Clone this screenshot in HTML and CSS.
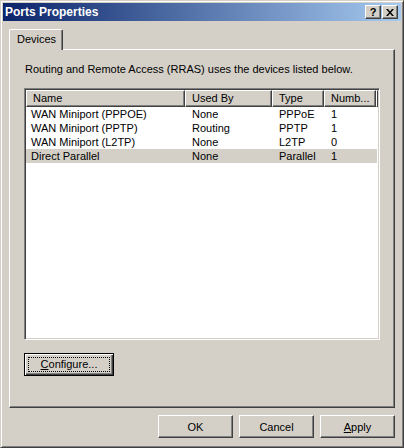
FILE: index.html
```html
<!DOCTYPE html>
<html lang="en">
  <head>
    <meta charset="UTF-8" />
    <title>Ports Properties</title>
    <link rel="stylesheet" href="styles.css">
  </head>
  <body>
    <div class="window">
      <div class="titlebar">
        <span class="title">Ports Properties</span>
        <div class="caption-btns">
          <span class="cap-btn help">?</span>
          <span class="cap-btn close">
            <svg width="8" height="7" viewBox="0 0 8 7">
              <path d="M0 0h2l2 2.5L6 0h2L5 3.5 8 7H6L4 4.5 2 7H0l3-3.5z" fill="#000" />
            </svg>
          </span>
        </div>
      </div>

      <div class="tabs">
        <div class="tab">Devices</div>
      </div>

      <div class="panel">
        <p class="intro">Routing and Remote Access (RRAS) uses the devices listed below.</p>

        <div class="listview">
          <div class="lv-header">
            <div class="lv-col col-name">Name</div>
            <div class="lv-col col-used">Used By</div>
            <div class="lv-col col-type">Type</div>
            <div class="lv-col col-num">Numb...</div>
            <div class="lv-col lv-fill"></div>
          </div>
          <div class="lv-row">
            <span class="col-name">WAN Miniport (PPPOE)</span>
            <span class="col-used">None</span>
            <span class="col-type">PPPoE</span>
            <span class="col-num">1</span>
          </div>
          <div class="lv-row">
            <span class="col-name">WAN Miniport (PPTP)</span>
            <span class="col-used">Routing</span>
            <span class="col-type">PPTP</span>
            <span class="col-num">1</span>
          </div>
          <div class="lv-row">
            <span class="col-name">WAN Miniport (L2TP)</span>
            <span class="col-used">None</span>
            <span class="col-type">L2TP</span>
            <span class="col-num">0</span>
          </div>
          <div class="lv-row selected">
            <span class="col-name">Direct Parallel</span>
            <span class="col-used">None</span>
            <span class="col-type">Parallel</span>
            <span class="col-num">1</span>
          </div>
        </div>

        <button class="btn btn-default"><span class="focus"><u>C</u>onfigure...</span></button>
      </div>

      <div class="actions">
        <button class="btn">OK</button>
        <button class="btn">Cancel</button>
        <button class="btn"><u>A</u>pply</button>
      </div>
    </div>
  </body>
</html>
```

FILE: styles.css
```css
* {
  box-sizing: border-box;
}

html,
body {
  margin: 0;
  padding: 0;
  background: #d4d0c8;
}
body {
  font-family: "Liberation Sans", Arial, sans-serif;
  font-size: 11px;
  color: #000;
}

.window {
  width: 404px;
  height: 448px;
  padding: 2px;
  border: 1px solid;
  border-color: #d4d0c8 #404040 #404040 #d4d0c8;
  box-shadow: inset 1px 1px #fff, inset -1px -1px #808080;
  background: #d4d0c8;
  display: flex;
  flex-direction: column;
}

/* title bar */
.titlebar {
  height: 18px;
  display: flex;
  align-items: center;
  padding: 0 3px 0 2px;
  background: linear-gradient(to right, #0a246a, #a6caf0);
}
.title {
  color: #fff;
  font-weight: bold;
  font-size: 12px;
}
.caption-btns {
  margin-left: auto;
  display: flex;
  gap: 1px;
}
.cap-btn {
  width: 16px;
  height: 14px;
  border: 1px solid;
  border-color: #fff #404040 #404040 #fff;
  box-shadow: inset -1px -1px #808080;
  background: #d4d0c8;
  display: flex;
  align-items: center;
  justify-content: center;
}
.cap-btn.help {
  font-weight: bold;
  font-size: 11px;
  line-height: 1;
}
.cap-btn.close svg {
  display: block;
}

/* tab strip */
.tabs {
  display: flex;
  margin: 8px 0 0 6px;
}
.tab {
  position: relative;
  z-index: 1;
  width: 54px;
  height: 21px;
  margin-bottom: -1px;
  padding-left: 7px;
  line-height: 19px;
  border: 1px solid;
  border-bottom: none;
  border-color: #fff #404040 #404040 #fff;
  border-radius: 2px 2px 0 0;
  box-shadow: inset -1px 0 #808080;
  background: #d4d0c8;
}

.panel {
  margin: 0 6px;
  height: 359px;
  padding: 13px 14px 0;
  border: 1px solid;
  border-color: #fff #404040 #404040 #fff;
  box-shadow: inset -1px -1px #808080;
}
.intro {
  margin: 0 0 12px 1px;
  line-height: 13px;
}

/* list view */
.listview {
  width: 356px;
  height: 252px;
  padding: 1px;
  border: 1px solid;
  border-color: #808080 #fff #fff #808080;
  box-shadow: inset 1px 1px #404040, inset -1px -1px #d4d0c8;
  background: #fff;
}
.lv-header {
  display: flex;
  height: 17px;
}
.lv-col {
  height: 17px;
  padding-left: 6px;
  line-height: 15px;
  border: 1px solid;
  border-color: #fff #404040 #404040 #fff;
  box-shadow: inset -1px -1px #808080;
  background: #d4d0c8;
  white-space: nowrap;
  overflow: hidden;
}
.lv-fill {
  flex: 1;
  padding: 0;
}
.col-name {
  width: 159px;
}
.col-used {
  width: 87px;
}
.col-type {
  width: 52px;
}
.col-num {
  width: 52px;
}
.lv-row {
  display: flex;
  width: 351px;
  height: 14px;
  line-height: 14px;
  white-space: nowrap;
}
.lv-row span {
  padding-left: 7px;
}
.lv-row .col-name {
  padding-left: 5px;
}
.lv-row.selected {
  background: #d4d0c8;
}

/* buttons */
.btn {
  width: 75px;
  height: 23px;
  padding: 0;
  border: 1px solid;
  border-color: #fff #404040 #404040 #fff;
  box-shadow: inset -1px -1px #808080;
  background: #d4d0c8;
  font-family: inherit;
  font-size: 11px;
  color: #000;
}
.btn-default {
  display: block;
  width: 90px;
  margin-top: 13px;
  padding: 3px;
  border-color: #000;
  box-shadow: inset 1px 1px #fff, inset -1px -1px #404040, inset -2px -2px #808080;
}
.btn-default .focus {
  display: block;
  height: 100%;
  line-height: 13px;
  border: 1px dotted #000;
}

.actions {
  display: flex;
  justify-content: flex-end;
  gap: 6px;
  margin-top: 7px;
  padding-right: 6px;
}
```
